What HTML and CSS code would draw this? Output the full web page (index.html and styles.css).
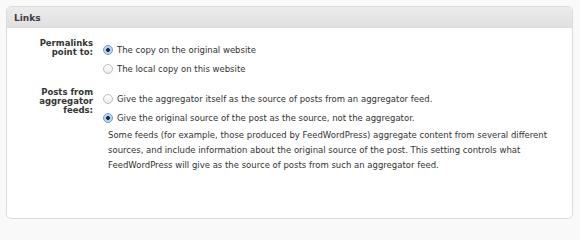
FILE: index.html
```html
<!DOCTYPE html>
<html>
<head>
<meta charset="utf-8">
<link rel="stylesheet" href="styles.css">
</head>
<body>
<div class="page">
  <div class="box">
    <div class="box-head">Links</div>
    <div class="box-body">
      <div class="row">
        <div class="label">Permalinks<br>point to:</div>
        <div class="opts">
          <label class="opt"><input type="radio" name="perma" checked><span>The copy on the original website</span></label>
          <label class="opt"><input type="radio" name="perma"><span>The local copy on this website</span></label>
        </div>
      </div>
      <div class="row row2">
        <div class="label">Posts from<br>aggregator<br>feeds:</div>
        <div class="opts">
          <label class="opt"><input type="radio" name="agg"><span>Give the aggregator itself as the source of posts from an aggregator feed.</span></label>
          <label class="opt"><input type="radio" name="agg" checked><span>Give the original source of the post as the source, not the aggregator.</span></label>
          <p class="desc">Some feeds (for example, those produced by FeedWordPress) aggregate content from several different sources, and include information about the original source of the post. This setting controls what FeedWordPress will give as the source of posts from such an aggregator feed.</p>
        </div>
      </div>
    </div>
  </div>
</div>
</body>
</html>
```

FILE: styles.css
```css
html, body {
  margin: 0;
  padding: 0;
  background: #f9f9f9;
  height: 229px;
  overflow: hidden;
}
body {
  font-family: "DejaVu Sans", "Liberation Sans", sans-serif;
  color: #333;
}
.page {
  box-sizing: border-box;
  padding: 6px 6px 0 6px;
  width: 580px;
  height: 229px;
}
.box {
  box-sizing: border-box;
  height: 213px;
  width: 567px;
  border: 1px solid #dcdcdc;
  border-radius: 5px;
  background: #fff;
  overflow: hidden;
}
.box-head {
  height: 20px;
  line-height: 22px;
  border-bottom: 1px solid #dcdcdc;
  background: linear-gradient(#ececec, #e0e0e0);
  padding-left: 7px;
  font-weight: bold;
  font-size: 9px;
  color: #3c3c46;
}
.box-body {
  padding-top: 12px;
}
.row {
  display: grid;
  grid-template-columns: 86px 1fr;
  column-gap: 10px;
}
.row2 {
  margin-top: 11px;
}
.label {
  text-align: right;
  font-weight: bold;
  font-size: 8.5px;
  line-height: 9px;
  margin-top: -1px;
  color: #333;
}
.opts {
  display: flex;
  flex-direction: column;
}
.opt {
  display: flex;
  align-items: center;
  height: 19px;
  font-size: 8.5px;
  color: #333;
}
.opt input {
  appearance: none;
  -webkit-appearance: none;
  margin: 0 4px 0 0;
  width: 10px;
  height: 10px;
  border-radius: 50%;
  border: 1px solid #bdbdbd;
  background: linear-gradient(#ffffff, #ececec);
  box-sizing: border-box;
  flex: none;
}
.opt input:checked {
  border-color: #6f9bd0;
  background: radial-gradient(circle, #1f2e44 0, #1f2e44 1.6px, #aecbec 2.2px, #d7e6f7 100%);
}
.desc {
  margin: 1px 0 0 0;
  padding-left: 5px;
  width: 452px;
  font-size: 8.5px;
  line-height: 15px;
  color: #333;
}
```
